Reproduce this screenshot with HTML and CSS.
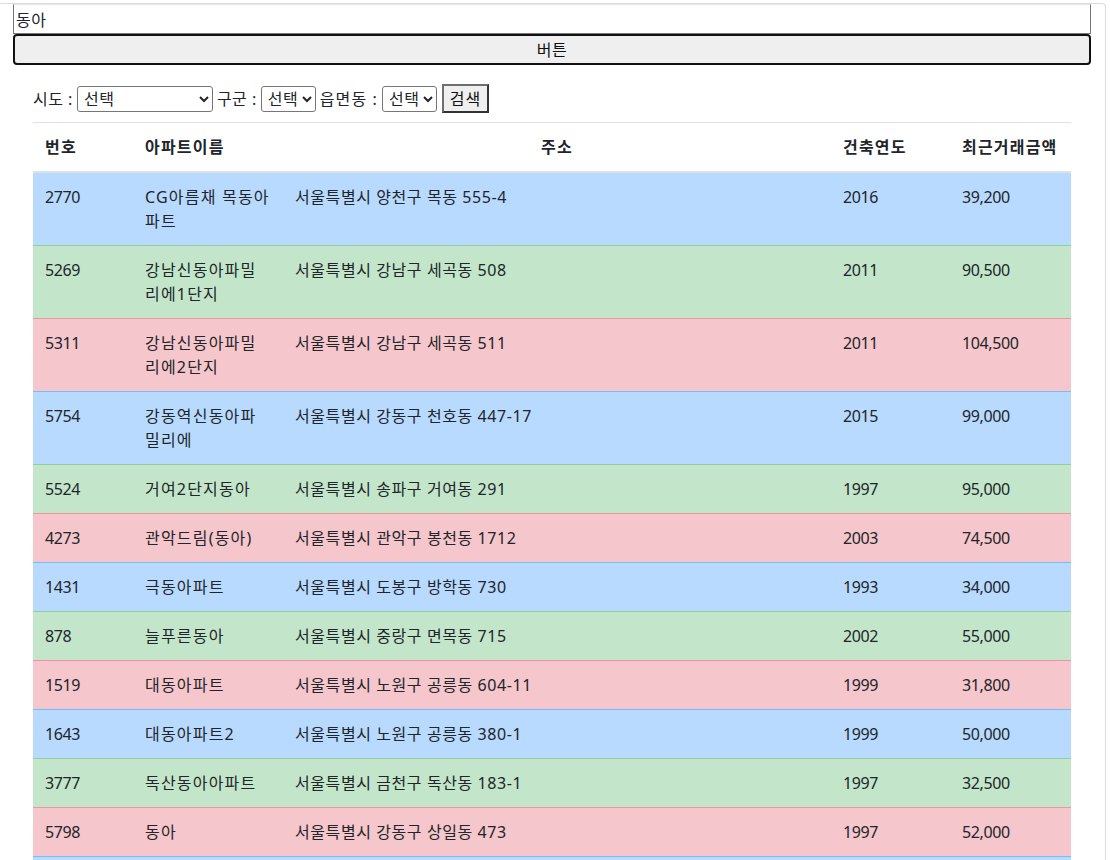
FILE: index.html
```html
<!DOCTYPE html>
<html lang="ko">
<head>
<meta charset="utf-8">
<title>아파트 검색</title>
<link rel="stylesheet" href="styles.css">
</head>
<body>
<div class="frame">
  <input class="keyword" type="text" value="동아">
  <button class="wide-btn" type="button">버튼</button>
  <div class="content">
    <div class="search">
      <span class="lbl">시도 :</span>
      <select class="sel sel-sido"><option>선택</option></select>
      <span class="lbl">구군 :</span>
      <select class="sel sel-small"><option>선택</option></select>
      <span class="lbl lbl-wide">읍면동 :</span>
      <select class="sel sel-small"><option>선택</option></select>
      <button class="search-btn" type="button">검색</button>
    </div>
    <table class="apt-table">
      <colgroup>
        <col class="c-no"><col class="c-name"><col class="c-addr"><col class="c-year"><col class="c-price">
      </colgroup>
      <thead>
        <tr><th>번호</th><th>아파트이름</th><th class="center">주소</th><th>건축연도</th><th>최근거래금액</th></tr>
      </thead>
      <tbody>
        <tr class="r-blue"><td>2770</td><td>CG아름채 목동아파트</td><td>서울특별시 양천구 목동 555-4</td><td>2016</td><td>39,200</td></tr>
        <tr class="r-green"><td>5269</td><td>강남신동아파밀리에1단지</td><td>서울특별시 강남구 세곡동 508</td><td>2011</td><td>90,500</td></tr>
        <tr class="r-red"><td>5311</td><td>강남신동아파밀리에2단지</td><td>서울특별시 강남구 세곡동 511</td><td>2011</td><td>104,500</td></tr>
        <tr class="r-blue"><td>5754</td><td>강동역신동아파밀리에</td><td>서울특별시 강동구 천호동 447-17</td><td>2015</td><td>99,000</td></tr>
        <tr class="r-green"><td>5524</td><td>거여2단지동아</td><td>서울특별시 송파구 거여동 291</td><td>1997</td><td>95,000</td></tr>
        <tr class="r-red"><td>4273</td><td>관악드림(동아)</td><td>서울특별시 관악구 봉천동 1712</td><td>2003</td><td>74,500</td></tr>
        <tr class="r-blue"><td>1431</td><td>극동아파트</td><td>서울특별시 도봉구 방학동 730</td><td>1993</td><td>34,000</td></tr>
        <tr class="r-green"><td>878</td><td>늘푸른동아</td><td>서울특별시 중랑구 면목동 715</td><td>2002</td><td>55,000</td></tr>
        <tr class="r-red"><td>1519</td><td>대동아파트</td><td>서울특별시 노원구 공릉동 604-11</td><td>1999</td><td>31,800</td></tr>
        <tr class="r-blue"><td>1643</td><td>대동아파트2</td><td>서울특별시 노원구 공릉동 380-1</td><td>1999</td><td>50,000</td></tr>
        <tr class="r-green"><td>3777</td><td>독산동아아파트</td><td>서울특별시 금천구 독산동 183-1</td><td>1997</td><td>32,500</td></tr>
        <tr class="r-red"><td>5798</td><td>동아</td><td>서울특별시 강동구 상일동 473</td><td>1997</td><td>52,000</td></tr>
        <tr class="r-blue"><td>1027</td><td>동아그린</td><td>서울특별시 강서구 방화동 827</td><td>1994</td><td>48,000</td></tr>
      </tbody>
    </table>
  </div>
</div>
</body>
</html>
```
FILE: styles.css
```css
html, body {
  margin: 0;
  padding: 0;
  background: #fff;
}
body {
  font-family: "Noto Sans", "Noto Sans CJK KR", sans-serif;
  font-size: 16px;
  line-height: 1.5;
  color: #212529;
}
.frame {
  margin-top: 3px;
  width: 1106px;
  box-sizing: border-box;
  border-top: 1px solid #dcdcdc;
  border-right: 1px solid #dcdcdc;
  border-top-right-radius: 4px;
  padding-left: 13px;
  padding-bottom: 40px;
}
.keyword {
  display: block;
  box-sizing: border-box;
  width: 1078px;
  height: 30px;
  margin: 0;
  padding: 0 2px;
  border: 1px solid #767676;
  border-top-color: #e6e6e6;
  font: inherit;
  font-size: 16px;
  letter-spacing: 0.6px;
  color: #212529;
  background: #fff;
}
.wide-btn {
  display: block;
  box-sizing: border-box;
  width: 1078px;
  height: 31px;
  margin: 0;
  padding: 0;
  border: 2px solid #111;
  border-radius: 4px;
  background: #efefef;
  font: inherit;
  font-size: 16px;
  letter-spacing: 0.6px;
  color: #111;
}
.content {
  width: 1038px;
  margin-left: 20px;
}
.search {
  display: flex;
  align-items: center;
  gap: 4px;
  height: 29px;
  margin-top: 19px;
}
.lbl {
  white-space: nowrap;
  letter-spacing: 0.5px;
}
.lbl-wide {
  letter-spacing: 1.1px;
}
.sel {
  box-sizing: border-box;
  height: 26px;
  font: inherit;
  font-size: 16px;
  line-height: 24px;
  letter-spacing: 0.6px;
  color: #212529;
  border: 1px solid #767676;
  border-radius: 3px;
  background: #fff;
  padding: 0 0 0 2px;
}
.sel-sido { width: 136px; }
.sel-small { width: 55px; }
.search-btn {
  box-sizing: border-box;
  height: 29px;
  width: 47px;
  margin-left: 1px;
  padding: 0;
  font: inherit;
  font-size: 16px;
  letter-spacing: 0.8px;
  color: #111;
  background: #efefef;
  border: 2px solid #333;
  border-top-color: #6e6e6e;
  border-left-color: #6e6e6e;
}
.apt-table {
  width: 1038px;
  margin-top: 9px;
  border-collapse: collapse;
  table-layout: fixed;
}
.c-no { width: 100px; }
.c-name { width: 150px; }
.c-addr { width: 548px; }
.c-year { width: 119px; }
.c-price { width: 121px; }
.apt-table th,
.apt-table td {
  padding: 12px;
  text-align: left;
  vertical-align: top;
  border-top: 1px solid #dee2e6;
}
.apt-table th {
  font-weight: 700;
  letter-spacing: 1.2px;
  vertical-align: bottom;
  border-bottom: 2px solid #dee2e6;
}
.apt-table th.center {
  text-align: center;
}
.apt-table td:nth-child(1),
.apt-table td:nth-child(4),
.apt-table td:nth-child(5) {
  letter-spacing: -0.4px;
}
.apt-table td:nth-child(2) {
  letter-spacing: 1.2px;
}
.apt-table td:nth-child(3) {
  letter-spacing: 0.58px;
}
.r-blue { background: #b8daff; }
.r-blue td { border-top-color: #7abaff; }
.r-green { background: #c3e6cb; }
.r-green td { border-top-color: #8fd19e; }
.r-red { background: #f5c6cb; }
.r-red td { border-top-color: #ed969e; }
.apt-table tbody tr:first-child td { border-top: 0; }
```
